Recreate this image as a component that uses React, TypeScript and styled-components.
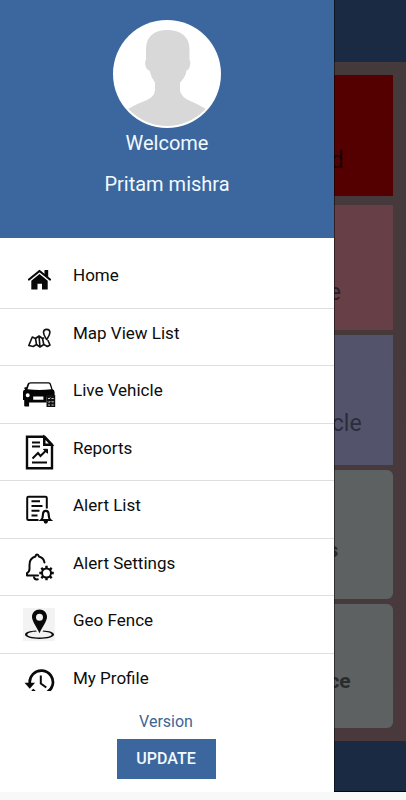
import React from "react";
import styled, { createGlobalStyle } from "styled-components";

const Global = createGlobalStyle`
  *, *::before, *::after { box-sizing: border-box; }
  body { margin: 0; background: #f8f8f8; font-family: Roboto, "Liberation Sans", sans-serif; }
`;

const Screen = styled.div`
  position: relative;
  display: flex;
  flex-direction: column;
  min-height: 100vh;
  padding-bottom: 8px;
  overflow: hidden;
`;

const Dashboard = styled.main`
  flex: 1;
  display: flex;
  flex-direction: column;
  background: linear-gradient(#443a3b, #4a393d);
  border-bottom: 1px solid #05080d;
`;

const TopBar = styled.header`
  height: 62px;
  background: #1a2a42;
`;

const BottomBar = styled.footer`
  height: 50px;
  background: #1a2a42;
`;

const Cards = styled.div`
  flex: 1;
  display: grid;
  grid-template-columns: 1fr 1fr;
  grid-template-rows: 125fr 125fr 130fr 129fr 124fr;
  column-gap: 12px;
  row-gap: 5px;
  padding: 13px;
`;

const Card = styled.section<{ $color: string; $ink: string; $base: number; $strong?: boolean }>`
  grid-column: 2;
  display: flex;
  align-items: flex-end;
  justify-content: center;
  padding-bottom: ${(p) => p.$base}px;
  border-radius: ${(p) => (p.$strong ? 6 : 0)}px;
  background: ${(p) => p.$color};
  color: ${(p) => p.$ink};
  font-size: ${(p) => (p.$strong ? 21 : 23)}px;
  font-weight: ${(p) => (p.$strong ? 700 : 400)};
  line-height: 26px;
  white-space: nowrap;

  &:first-child {
    margin-bottom: 4px;
  }
`;

const Drawer = styled.aside`
  position: absolute;
  top: 0;
  bottom: 8px;
  left: 0;
  width: 334px;
  max-width: 84vw;
  display: flex;
  flex-direction: column;
  background: #fff;
  box-shadow: 1px 0 0 rgba(0, 0, 0, 0.5);
`;

const Profile = styled.div`
  height: 238px;
  flex: none;
  display: flex;
  flex-direction: column;
  align-items: center;
  padding-top: 20px;
  background: #3b679e;
  color: #f1faff;
  font-size: 20px;
  line-height: 28px;
`;

const Avatar = styled.svg`
  width: 108px;
  height: 108px;
  flex: none;
`;

const ProfileLine = styled.div<{ $gap: number }>`
  margin-top: ${(p) => p.$gap}px;
`;

const MenuClip = styled.nav`
  flex: 1;
  min-height: 0;
  overflow: hidden;
  padding-top: 13px;
`;

const Menu = styled.ul`
  display: grid;
  grid-auto-rows: 1fr;
  height: 460px;
  margin: 0;
  padding: 0;
  list-style: none;
`;

const MenuItem = styled.li`
  border-bottom: 1px solid #dedede;
`;

const MenuLink = styled.a`
  display: flex;
  gap: 17px;
  height: 100%;
  padding: 10px 16px 0 22px;
  color: #0c0c0c;
  text-decoration: none;
`;

const Icon = styled.svg`
  width: 34px;
  height: 38px;
  flex: none;
`;

const Label = styled.span`
  font-size: 17px;
  line-height: 28px;
`;

const Footer = styled.div`
  flex: none;
  display: flex;
  flex-direction: column;
  align-items: center;
  padding: 21px 2px 13px 0;
`;

const Version = styled.div`
  color: #3d6593;
  font-size: 16px;
  line-height: 20px;
`;

const UpdateButton = styled.button`
  width: 99px;
  height: 40px;
  margin-top: 7px;
  border: 0;
  padding: 0;
  background: #3b679e;
  color: #f1faff;
  font: 500 16px/20px Roboto, "Liberation Sans", sans-serif;
`;

const HomeIcon = () => (
  <Icon viewBox="0 0 34 38">
    <path d="M7 18.5 17.5 10 28 18.5" fill="none" stroke="#080808" strokeWidth="2.2" strokeLinecap="round" strokeLinejoin="round" />
    <path d="M22.5 9h3.7v7.5l-3.7-3zM17.5 13l8.2 6.7v8.7h-5.7v-5.700h-4.500v5.700H9.300v-8.700z" fill="#080808" />
  </Icon>
);

const MapIcon = () => (
  <Icon viewBox="0 0 34 38" fill="none" stroke="#111" strokeWidth="1.6" strokeLinejoin="round" strokeLinecap="round">
    <path d="m10.300 18-3.500 8.500 4.400 1 3.300-2 3.500 2.500 3.800-2.500 3.600 2 2.600-1.500-2-4.500M10.300 18l3.200 1.500 3.500-2.500 3.500 2.500 1.200-.5M13.500 19.500l1 6M17 17l1 11M20.500 19.500l1.300 6" />
    <path d="M24.700 20.500c-1.700-2.700-3.200-4.600-3.200-6.900a3.200 3.200 0 0 1 6.400 0c0 2.300-1.500 4.200-3.200 6.900z" />
  </Icon>
);

const CarIcon = () => (
  <Icon viewBox="0 0 34 38">
    <path fillRule="evenodd" fill="#050505" d="M8.6 6.2h18.2q1.6 0 2.1 1.6l1.7 5.5q1.9.7 2 3v4.500h-8v5.700h-17.500v4H3.100q-.9 0-.9-1V24H1v-8.200q.2-1.900 2.200-2.400l-.9-.8q-.4-1.100.8-1.300h1.300l1.200-3.500q.6-1.600 3-1.600zm.1 1.300q-1.300 0-1.700 1.200l-1.500 4.600q12 1.200 23.800 0l-1.500-4.500q-.4-1.300-1.500-1.300zM5.700 17.200a2 2 0 1 0 0 4 2 2 0 0 0 0-4zM11.200 20.500v3.300h10.200v-3.300z" />
    <path d="M24.500 19h8.700v12h-8.700z" fill="#111" />
    <path d="m26 22 1 1 1.300-1.500m-2.300 4 1 1 1.300-1.500m-2.300 4h2M29.500 22.500h2.200M29.500 25.800h2.200M29.500 29h2.200" fill="none" stroke="#fff" strokeWidth=".8" />
  </Icon>
);

const ReportIcon = () => (
  <Icon viewBox="0 0 34 38" fill="none" stroke="#0a0a0a" strokeWidth="2">
    <path d="M5 2.700h17.500l7.500 8v23.600H5z" strokeWidth="2.400" />
    <path d="M22 3v8h8z" fill="#0a0a0a" />
    <path d="M23.500 6v3.500h3.300z" fill="#fff" stroke="none" />
    <path d="M10 8.500h8M10 12.500h8M10 28.500h15" strokeWidth="1.800" />
    <path d="m10.500 24.500 5.500-5.500 2.500 3 5.500-5.500" />
    <path d="M21.500 15.300h4v4z" fill="#0a0a0a" strokeWidth="1" />
  </Icon>
);

const AlertListIcon = () => (
  <Icon viewBox="0 0 34 38" fill="none" stroke="#0a0a0a" strokeWidth="2">
    <path d="M16.500 29H6.500a1.300 1.300 0 0 1-1.300-1.300V7a1.300 1.300 0 0 1 1.300-1.300h17A1.300 1.300 0 0 1 24.800 7v10.500" />
    <path d="M9.500 10.300h8.500M9.500 15h11M9.500 19.700h8M9.500 24.400h6" strokeWidth="2" />
    <path d="M19.200 29c1.500-1.400 1.700-2.800 1.700-5.100 0-2.500 1-4.100 2.900-4.100s2.900 1.600 2.900 4.100c0 2.300.2 3.700 1.700 5.100z" strokeWidth="2.200" />
    <path d="M21.500 30h4.600q-.3 2.700-2.300 2.700t-2.300-2.700z" fill="#0a0a0a" stroke="none" />
  </Icon>
);

const AlertSettingsIcon = () => (
  <Icon viewBox="0 0 34 38">
    <g fill="none" stroke="#0a0a0a" strokeWidth="2" strokeLinecap="round" strokeLinejoin="round">
      <path d="M16 26.500H5v-2.300q2.500-1.500 2.500-4.500v-4c0-4.600 2.800-7.400 6-8.200q.2-2 1.600-2t1.800 2c3 .7 5 2.800 5.600 6" />
      <path d="M12 28.300q.7 2.700 3.800 2" />
    </g>
    <circle cx="24.500" cy="24" r="4.500" fill="none" stroke="#0a0a0a" strokeWidth="2" />
    <path d="M24.500 19.500v-2.700M24.500 28.500v2.800M20 24h-2.700M29 24h2.800M21.300 20.800l-2-2M27.700 20.800l2-2M21.300 27.200l-2 2M27.700 27.200l2 2" stroke="#0a0a0a" strokeWidth="2.400" />
  </Icon>
);

const GeoIcon = () => (
  <Icon viewBox="0 0 34 38">
    <path d="M1 2h32v33H1z" fill="#f3f3f3" />
    <path fillRule="evenodd" fill="#090909" d="M3 28.600c0-2.400 4.800-4 11-4.200l.8 1c-5.500.3-9.500 1.400-9.500 3 0 1.800 5.200 3 12.200 3s12.200-1.200 12.200-3c0-1.500-4-2.700-9.200-3l.7-1c6.300.2 10.800 1.900 10.800 4.200 0 2.700-6.500 4.400-14.500 4.400S3 31.300 3 28.600z" />
    <path fillRule="evenodd" fill="#090909" d="M17.500 3.500c4.300 0 7.500 3.100 7.500 7.300 0 4.700-4.500 9.500-7.500 16.500-3-7-7.500-11.800-7.500-16.500 0-4.200 3.200-7.300 7.500-7.300zm0 4.200a3.500 3.500 0 1 0 0 7 3.500 3.500 0 0 0 0-7z" />
  </Icon>
);

const HistoryIcon = () => (
  <Icon viewBox="0 0 34 38">
    <path d="M7.800 19.500A11.600 11.600 0 1 1 14 28.500" fill="none" stroke="#0a0a0a" strokeWidth="2.700" />
    <path d="M2.500 18.800h10.500l-5.200 6z" fill="#0a0a0a" />
    <path d="M18.800 11.500v8l5.500 4" fill="none" stroke="#0a0a0a" strokeWidth="2" />
    <path d="m11.300 24.700 2.300 2-1.800 1.700-2.500-2z" fill="#0a0a0a" />
  </Icon>
);

const items = [
  { label: "Home", icon: <HomeIcon /> },
  { label: "Map View List", icon: <MapIcon /> },
  { label: "Live Vehicle", icon: <CarIcon /> },
  { label: "Reports", icon: <ReportIcon /> },
  { label: "Alert List", icon: <AlertListIcon /> },
  { label: "Alert Settings", icon: <AlertSettingsIcon /> },
  { label: "Geo Fence", icon: <GeoIcon /> },
  { label: "My Profile", icon: <HistoryIcon /> },
];

export default function App() {
  return (
    <>
      <Global />
      <Screen>
        <Dashboard>
          <TopBar />
          <Cards>
            <Card $color="#540000" $ink="#1d0305" $base={22}>Stopped</Card>
            <Card $color="#673f47" $ink="#2b2027" $base={24}>Inactive</Card>
            <Card $color="#53546b" $ink="#2b2c3c" $base={28}>Live Vehicle</Card>
            <Card $color="#5d6161" $ink="#282c2c" $base={36} $strong>Reports</Card>
            <Card $color="#5d6161" $ink="#282c2c" $base={34} $strong>Geo Fence</Card>
          </Cards>
          <BottomBar />
        </Dashboard>
        <Drawer>
          <Profile>
            <Avatar viewBox="0 0 108 108" role="img" aria-label="Profile photo">
              <defs>
                <clipPath id="avatar-clip"><circle cx="54" cy="54" r="52" /></clipPath>
              </defs>
              <circle cx="54" cy="54" r="54" fill="#fff" />
              <path
                clipPath="url(#avatar-clip)"
                fill="#d8d8d8"
                d="M54 10c14 0 22.500 7 22.500 19v11q1.500 1 .5 5.500-1 4.500-3.500 5-.8 6.500-6.500 12v8q1 6 8 9.500 10 4 18 9v20H15V89q8-5 19-9 7-3 8-9.500v-8q-4-5-5.500-12-3-.5-4-5-1-4.500.5-5.500V29c0-12 8-19 21-19z"
              />
            </Avatar>
            <ProfileLine $gap={1}>Welcome</ProfileLine>
            <ProfileLine $gap={13}>Pritam mishra</ProfileLine>
          </Profile>
          <MenuClip>
            <Menu>
              {items.map((item) => (
                <MenuItem key={item.label}>
                  <MenuLink href="#">
                    {item.icon}
                    <Label>{item.label}</Label>
                  </MenuLink>
                </MenuItem>
              ))}
            </Menu>
          </MenuClip>
          <Footer>
            <Version>Version</Version>
            <UpdateButton type="button">UPDATE</UpdateButton>
          </Footer>
        </Drawer>
      </Screen>
    </>
  );
}
